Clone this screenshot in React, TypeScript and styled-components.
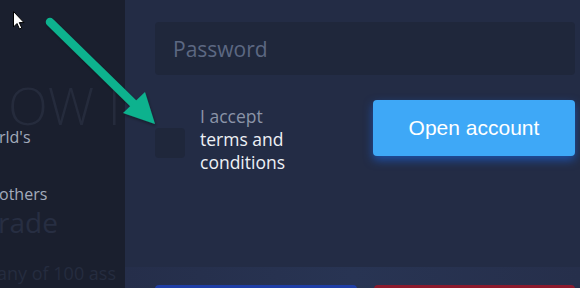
import React from "react";
import styled, { createGlobalStyle } from "styled-components";

const Global = createGlobalStyle`
  html, body { margin: 0; padding: 0; overflow: hidden; }
  body { background: #1a1f2e; font-family: "Open Sans", "Noto Sans", sans-serif; }
  #root { height: 100vh; }
`;

const Page = styled.div`
  position: relative;
  display: flex;
  height: 288px;
  width: 580px;
  overflow: hidden;
`;

const Side = styled.div`
  width: 125px;
  flex: none;
  background: #1a1f2e;
  padding-top: 79px;
  box-sizing: border-box;
  overflow: hidden;
  white-space: nowrap;
`;

const SideLine = styled.div<{ $size: number; $lh: number; $top: number; $color: string; $weight?: number; $shift?: number }>`
  font-size: ${(p) => p.$size}px;
  line-height: ${(p) => p.$lh}px;
  height: ${(p) => p.$lh}px;
  margin-top: ${(p) => p.$top}px;
  margin-left: ${(p) => p.$shift ?? 0}px;
  color: ${(p) => p.$color};
  font-weight: ${(p) => p.$weight ?? 400};
`;

const Main = styled.div`
  flex: 1;
  display: flex;
  flex-direction: column;
  background: #232c45;
`;

const Form = styled.div`
  display: flex;
  flex-direction: column;
  padding: 22px 5px 0 30px;
`;

const Input = styled.div`
  height: 53px;
  border-radius: 4px;
  background: #1f273b;
  display: flex;
  align-items: center;
  padding-left: 18px;
  font-size: 21px;
  color: #5c6882;
`;

const Row = styled.div`
  display: flex;
  align-items: flex-start;
  margin-top: 25px;
`;

const Accept = styled.label`
  flex: 1;
  display: flex;
  align-items: center;
  gap: 15px;
  padding-top: 5px;
`;

const Box = styled.span`
  width: 30px;
  height: 30px;
  border-radius: 4px;
  background: #1f273b;
  flex: none;
  margin-top: 6px;
`;

const Label = styled.div`
  font-size: 17.5px;
  line-height: 23px;
  color: #eef1f5;
`;

const Muted = styled.div`
  color: #8b94a8;
`;

const OpenButton = styled.button`
  width: 202px;
  height: 56px;
  border: none;
  border-radius: 4px;
  background: #3ea8f7;
  color: #ffffff;
  font-family: "Liberation Sans", Arial, sans-serif;
  font-size: 21px;
  box-shadow: 0 4px 10px rgba(25, 110, 250, 0.55);
  padding: 0;
`;

const Footer = styled.div`
  margin-top: auto;
  height: 21px;
  box-sizing: border-box;
  padding: 18px 5px 0 30px;
  display: flex;
  gap: 17px;
  background: linear-gradient(90deg, #252e4a 0%, #283453 50%, #262f4b 100%);
`;

const FootButton = styled.div<{ $color: string }>`
  flex: 1;
  height: 30px;
  border-radius: 4px;
  background: ${(p) => p.$color};
`;

const Overlay = styled.svg`
  position: absolute;
  left: 0;
  top: 0;
  pointer-events: none;
`;

export default function App() {
  return (
    <>
      <Global />
      <Page>
        <Side>
          <SideLine $size={52} $lh={52} $top={0} $color="#252b3c" $weight={300} $shift={8}>OW I</SideLine>
          <SideLine $size={16} $lh={22} $top={-5} $color="#a3abbc" $shift={-1}>rld's</SideLine>
          <SideLine $size={16} $lh={22} $top={35} $color="#a3abbc" $shift={-1}>others</SideLine>
          <SideLine $size={28} $lh={32} $top={1} $color="#272e42" $shift={-2}>rade</SideLine>
          <SideLine $size={18} $lh={22} $top={24} $color="#252c3f" $shift={-3}>any of 100 ass</SideLine>
        </Side>
        <Main>
          <Form>
            <Input>Password</Input>
            <Row>
              <Accept>
                <Box />
                <Label>
                  <Muted>I accept</Muted>
                  terms and
                  <br />
                  conditions
                </Label>
              </Accept>
              <OpenButton>Open account</OpenButton>
            </Row>
          </Form>
          <Footer>
            <FootButton $color="#1f3ea6" />
            <FootButton $color="#8c1a2d" />
          </Footer>
        </Main>
        <Overlay width="580" height="288" viewBox="0 0 580 288">
          <defs>
            <filter id="sh" x="-20%" y="-20%" width="140%" height="140%">
              <feDropShadow dx="1" dy="2" stdDeviation="1.5" floodColor="#000" floodOpacity="0.35" />
            </filter>
          </defs>
          <g filter="url(#sh)">
            <line x1="50" y1="22" x2="136" y2="106" stroke="#0fb28e" strokeWidth="8.5" strokeLinecap="round" />
            <polygon points="155,124 123,113 145,92" fill="#0fb28e" />
          </g>
          <path
            d="M13.5 11.5 L13.5 27 L17 23.5 L19.5 29 L21.8 28 L19.3 22.6 L24 22.6 Z"
            fill="#ffffff"
            stroke="#000000"
            strokeWidth="1"
            strokeLinejoin="round"
          />
        </Overlay>
      </Page>
    </>
  );
}
